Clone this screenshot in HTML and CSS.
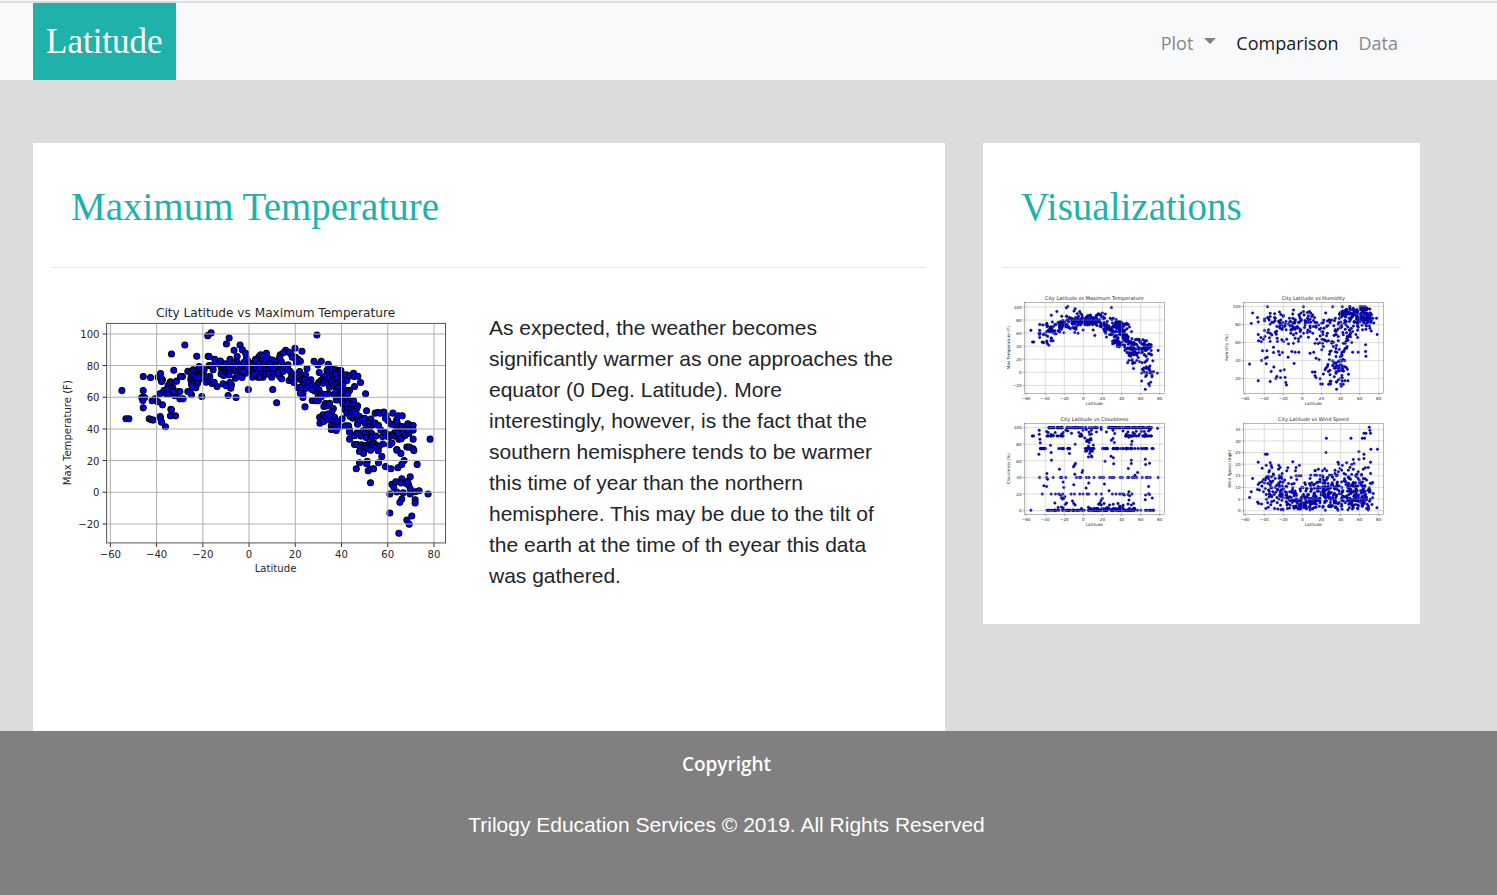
FILE: index.html
```html
<!DOCTYPE html>
<html lang="en">
<head>
<meta charset="utf-8">
<meta name="viewport" content="width=device-width, initial-scale=1">
<title>Latitude - Maximum Temperature</title>
<link rel="stylesheet" href="styles.css">
</head>
<body>
<header class="navbar">
  <a class="brand" href="#">Latitude</a>
  <nav class="nav-links" aria-label="Main">
    <button class="nav-item nav-toggle" type="button" aria-haspopup="true">Plot<span class="caret"></span></button>
    <a class="nav-item active" href="#comparison">Comparison</a>
    <a class="nav-item" href="#data">Data</a>
  </nav>
</header>
<main class="content">
  <section class="card card-main">
    <h1 class="card-title">Maximum Temperature</h1>
    <hr class="rule">
    <div class="article">
      <figure class="plot" data-chart="temperature"></figure>
      <p class="description">As expected, the weather becomes significantly warmer as one approaches the equator (0 Deg. Latitude). More interestingly, however, is the fact that the southern hemisphere tends to be warmer this time of year than the northern hemisphere. This may be due to the tilt of the earth at the time of th eyear this data was gathered.</p>
    </div>
  </section>
  <aside class="card card-side">
    <h2 class="card-title">Visualizations</h2>
    <hr class="rule">
    <div class="thumbs">
      <a class="plot" href="#temperature" data-chart="temperature"></a>
      <a class="plot" href="#humidity" data-chart="humidity"></a>
      <a class="plot" href="#cloudiness" data-chart="cloudiness"></a>
      <a class="plot" href="#wind" data-chart="wind"></a>
    </div>
  </aside>
</main>
<footer class="footer">
  <h2 class="footer-title">Copyright</h2>
  <p class="footer-text">Trilogy Education Services © 2019. All Rights Reserved</p>
</footer>
<script src="charts.js"></script>
</body>
</html>
```

FILE: styles.css
```css
* {
  box-sizing: border-box;
}

body {
  margin: 0;
  min-height: 100vh;
  display: flex;
  flex-direction: column;
  background: #dcdcdc;
  color: #212529;
  font-family: "Liberation Sans", Arial, sans-serif;
  font-size: 21px;
  line-height: 31px;
  border-top: 1px solid #f8f9fa;
}

.navbar {
  display: flex;
  justify-content: space-between;
  align-items: stretch;
  min-height: 77px;
  margin-top: 2px;
  padding: 0 89px 0 33px;
  background: #f8f9fb;
}

.brand {
  padding: 16px 13px;
  background: #20b2aa;
  color: #fff;
  font-family: "Liberation Serif", "Times New Roman", serif;
  font-size: 35px;
  line-height: 45px;
  text-decoration: none;
}

.nav-links {
  display: flex;
  align-items: center;
  padding-top: 3px;
}

.nav-item {
  padding: 0 10px;
  border: 0;
  background: none;
  color: #858687;
  font-family: "Open Sans", "Noto Sans", sans-serif;
  font-size: 18px;
  font-weight: 400;
  line-height: 31px;
  text-decoration: none;
  cursor: pointer;
}

.nav-item.active {
  color: #191919;
}

.nav-toggle {
  display: flex;
  align-items: center;
  gap: 11px;
}

.caret {
  margin-bottom: 4px;
  border-top: 6px solid #808182;
  border-left: 6px solid transparent;
  border-right: 6px solid transparent;
}

.content {
  flex: 1;
  display: grid;
  grid-template-columns: minmax(0, 912fr) minmax(0, 437fr);
  gap: 38px;
  padding: 63px 77px 0 33px;
}

.card {
  padding: 38px 19px 0;
  background: #fff;
}

.card-side {
  align-self: start;
  padding-bottom: 94px;
}

.card-title {
  margin: 0;
  padding: 0 19px;
  color: #20b2aa;
  font-family: Georgia, "Liberation Serif", serif;
  font-size: 39px;
  font-weight: 400;
  line-height: 52px;
}

.rule {
  margin: 34px 0 20px;
  border: 0;
  border-top: 1px solid #e5e5e5;
}

.article {
  display: grid;
  grid-template-columns: 1fr 1fr;
  align-items: start;
}

.plot {
  display: block;
  margin: 0;
}

.plot svg {
  display: block;
  width: 100%;
  height: auto;
}

.description {
  margin: 24px 0 0;
  padding-right: 27px;
}

.thumbs {
  display: grid;
  grid-template-columns: 1fr 1fr;
  gap: 1px 38px;
}

.footer {
  min-height: 164px;
  padding: 18px 44px 0 0;
  background: #808080;
  color: #fff;
  text-align: center;
}

.footer-title {
  margin: 0;
  font-family: "Open Sans", "Noto Sans", sans-serif;
  font-size: 19px;
  font-weight: 600;
  line-height: 31px;
}

.footer-text {
  margin: 29px 0 0;
}

.chart-text {
  fill: #262626;
  font-family: "DejaVu Sans", sans-serif;
  font-size: 10px;
}

.chart-title {
  font-size: 12px;
}

.anchor-middle {
  text-anchor: middle;
}

.anchor-end {
  text-anchor: end;
}

.chart-grid {
  fill: none;
  stroke: #b0b0b0;
  stroke-width: 1;
}

.chart-ticks {
  fill: none;
  stroke: #333;
  stroke-width: 1;
}

.chart-frame {
  fill: none;
  stroke: #555;
  stroke-width: 1;
}

.chart-dots {
  fill: #0000f0;
  stroke: #000;
  stroke-width: 1;
}

.thumbs .chart-dots {
  stroke: #000050;
}
```

FILE: charts.js
```js
// Each series lists "x,y" pairs on its own drawing grid; origin and scale map them to the 432x288 chart.
const big = (x, y) => ({ dx: x, dy: y, k: 3.039 });
const small = (x, y) => ({ dx: x, dy: y, k: 1.257 });

const charts = {
  temperature: {
    title: "City Latitude vs Maximum Temperature",
    label: "Max Temperature (F)",
    labelX: 19,
    ticks: [100, 80, 60, 40, 20, 0, -20], top: 45.4, step: 31.3,
    series: [
      { ...big(-6, 36), points: `216,272 228,357 237,357 280,230 302,233 325,231 332,221 338,240 280,272 276,293 284,293 279,302 280,324 298,357 305,360 310,361 331,350 332,355 335,367 347,381 338,315 307,303 315,297 324,306 363,328 365,330 362,348 377,348 365,162 372,211 405,135 474,107 484,99 441,169 475,169 478,170 538,114 530,132 553,151 571,135 578,150 588,160 562,170 541,178 560,184 596,269 535,287 559,293 456,290 414,275 425,285 421,278 414,214 430,210 448,200 398,230 392,230 380,244 362,246 360,250 355,257 330,282 342,272 349,282 357,282 365,270 369,262 360,265 375,288 383,276 390,275 390,297 400,297 334,235 335,245 425,215 432,213 440,217 448,212 455,213 463,210 424,230 432,228 440,229 448,225 455,222 423,240 430,243 438,240 447,240 455,233 425,252 433,250 443,251 433,261 438,264 427,260 469,247 477,240 480,230 487,251 493,247 502,260 490,210 478,197 485,197 495,178 502,192 512,183 515,205 520,213 528,205 520,195 527,192 514,222 522,227 532,217 538,225 540,213 541,205 548,196 552,190 550,200 556,213 557,235 563,225 570,210 572,197 575,215 577,233 583,205 588,220 590,192 595,183 590,175 600,200 605,215 608,232 600,210 610,190 618,178 618,195 620,210 625,232 625,220 628,170 520,252 530,258 543,265 545,255 540,248 582,188 584,213 594,204 612,222 468,230 456,228 446,232 370,275 352,268` },
      { ...big(564, 36), points: `99,269 111,309 196,321 232,105 166,145 187,154 138,151 154,162 148,157 80,160 63,165 70,170 85,175 98,180 110,183 122,165 125,185 132,158 168,172 175,178 182,184 170,188 158,172 223,184 245,184 266,193 235,195 202,206 180,215 239,218 47,180 60,190 68,197 75,188 82,200 90,192 75,207 87,210 97,203 105,196 112,203 103,212 118,212 125,207 130,215 132,198 145,195 145,209 152,215 160,224 55,215 62,222 70,232 60,232 80,222 88,222 96,232 60,205 105,222 120,230 126,237 115,218 120,172 148,242 157,240 155,232 165,238 163,248 172,225 180,232 185,241 190,238 198,225 196,240 192,255 175,264 182,262 186,272 190,282 190,293 182,280 200,265 205,255 214,240 208,248 218,256 225,265 230,258 227,274 218,270 238,270 237,248 244,242 250,236 250,250 258,228 262,211 270,213 278,208 288,210 296,212 304,212 255,242 265,236 272,230 280,225 288,222 297,222 305,222 265,250 275,245 285,240 293,235 303,235 312,228 320,225 270,262 280,258 288,252 298,248 306,245 315,240 322,242 330,228 342,220 343,230 355,229 363,248 345,260 378,282 330,271 322,272 312,270 305,262 310,255 296,265 290,275 283,283 292,287 300,290 308,285 318,284 325,282 307,275 265,282 255,283 243,280 240,288 235,293 218,302 227,303 236,303 245,291 257,311 253,320 262,318 270,310 281,326 277,335 290,300 297,300 305,297 316,297 324,300 333,303 342,303 310,312 318,318 326,312 334,318 344,315 354,318 315,328 324,328 333,330 345,328 352,325 322,340 335,340 345,335 240,352 241,370 250,345 257,355 252,365 264,343 266,360 272,350 278,362 281,372 275,378 285,352 288,362 296,366 297,376 285,383 275,389 290,392 308,357 302,380 318,378 327,378 330,390 332,350 340,355 345,348 353,352 350,342 360,350 354,373 362,363 368,358 376,370 375,355 381,333 394,358 390,370 393,380 400,375 407,370 417,377 407,340 415,338 422,340 433,337 440,348 445,362 438,355 460,340 476,348 488,348 471,361 455,373 465,375 473,368 475,382 487,380 498,381 505,372 513,378 521,377 521,391 330,397 330,418 345,408 352,400 364,409 370,393 380,390 378,400 380,413 396,401 397,412 409,409 424,391 429,410 437,398 447,405 447,412 457,408 462,402 468,395 470,410 478,408 487,403 490,410 492,395 497,407 508,401 505,390 475,400 478,418 485,417 521,418 572,418 345,434 353,434 366,435 362,443 375,440 382,436 390,432 397,432 403,430 410,436 418,440 430,433 450,435 457,430 472,449 502,442 510,442 521,447 385,445 395,447 405,443` },
      { ...big(564, 456), points: `360,35 372,41 393,31 416,33 427,50 472,31 484,41 523,32 350,87 360,69 383,65 381,72 386,93 393,88 402,87 417,69 438,80 454,87 475,84 487,74 494,62 533,74 393,129 512,111 487,117 457,134 463,143 469,126 485,130 500,131 508,137 512,147 505,125 451,163 472,157 491,159 512,163 527,156 539,153 566,163 487,178 481,188 527,180 527,190 451,220 517,229 502,241 509,254 478,281` }
    ]
  },
  humidity: {
    title: "City Latitude vs Humidity",
    label: "Humidity (%)",
    labelX: 17,
    ticks: [100, 80, 60, 40, 20], top: 44.5, step: 43.1,
    series: [
      { ...small(-2, 6), points: `142,50 97,69 93,101 112,83 114,96 142,83 133,93 133,87 150,70 150,80 147,90 155,97 150,103 160,97 165,85 178,66 182,74 182,90 175,95 180,105 188,98 195,103 205,103 170,110 180,115 190,110 198,120 210,108 212,95 208,85 212,120 218,115 225,118 218,72 220,60 223,100 226,90 232,110 235,98 240,85 238,78 245,90 250,50 250,65 252,75 262,68 268,65 265,78 272,70 275,80 262,85 270,88 278,75 258,95 255,105 265,98 272,97 280,92 285,98 290,98 270,108 280,110 288,112 296,105 305,100 303,115 310,98 317,69 322,93 330,93 320,110 335,90 338,50 312,115 358,72 367,72 362,68 367,50 375,65 380,60 390,50 400,55 420,50 426,50 88,223 114,134 115,153 122,143 123,156 134,140 130,148 133,122 143,128 145,120 150,130 148,144 150,155 165,127 155,135 160,172 160,188 178,195 187,188 175,185 171,145 172,155 127,183 140,183 124,212 138,222 135,205 141,202 204,202 222,221 161,232 153,245 181,243 192,240 181,264 170,260 167,266 195,263 197,278 199,286 114,273 150,275 185,150 190,155 200,148 205,162 212,130 220,135 228,130 225,145 220,160 215,185 225,187 236,187 235,155 240,125 242,140 250,130 262,128 265,142 270,125 278,130 285,160 290,148 300,138 305,125 307,160 312,150 322,130 320,155 270,190 281,187 288,205 297,210 305,180 310,170 277,247 285,247 288,264 285,258 300,267 302,283 310,253 307,283 330,275 350,299 362,283 375,273 384,273 367,265 318,235 315,240 322,230 325,245 330,255 437,165 437,185 438,199 415,187 398,187 472,134 470,85 370,160 378,155 372,182 380,175 366,195 330,185 340,170 335,160 328,210 450,115 438,118 428,120 415,112 390,135 382,140 398,125`,
        clouds: [[412, 76, 40, 24, 75], [438, 70, 22, 34, 55], [355, 225, 22, 40, 60], [358, 130, 34, 38, 50], [385, 95, 25, 30, 20], [245, 100, 50, 30, 28], [180, 100, 32, 22, 16]], limits: [80, 462, 50, 300] }
    ]
  },
  cloudiness: {
    title: "City Latitude vs Cloudiness",
    label: "Cloudiness (%)",
    labelX: 19,
    ticks: [100, 80, 60, 40, 20, 0], top: 44.5, step: 39.8,
    series: [
      { ...small(-6, 9), points: `97,72 101,72 118,55 118,67 120,82 121,93 117,127 152,100 154,122 155,145 179,172 209,125 226,97 227,155 224,160 221,165 140,59 145,62 160,70 154,68 166,62 185,67 190,62 198,55 204,57 215,64 237,62 244,66 250,55 260,53 268,60 270,68 275,66 273,80 265,86 268,92 262,85 266,135 276,135 270,125 272,118 262,117 275,55 290,60 305,53 320,60 340,55 345,65 340,80 335,85 344,92 334,133 341,138 342,156 316,148 370,57 380,66 385,60 388,76 395,98 397,88 400,62 405,66 410,58 395,145 395,155 386,170 437,142 438,158 450,154 414,182 406,190 420,67 425,59 434,59 438,66 447,57 452,53 474,49 93,296 127,247 132,222 140,224 141,185 140,197 143,202 154,247 190,211 192,227 222,219 225,187 249,176 247,182 259,229 267,214 314,217 328,237 388,240 385,248 390,252 374,250 447,224 437,264 458,259 438,250 447,246 450,248 182,250 185,258 192,260 195,255 188,262 200,274 196,278 218,268 222,275 226,280 165,274 175,287 185,286 190,289 304,266 308,260 313,275 300,277 355,275 360,283 385,277 388,265 395,280 402,275 119,197 160,197 182,197 186,197 198,197 230,197 239,197 243,197 260,197 268,197 283,197 300,197 307,197 312,197 330,197 337,197 343,197 362,197 368,197 384,197 388,197 398,197 404,197 411,197 428,197 440,197 444,197 452,197 476,197 167,247 177,247 189,247 214,247 224,247 240,247 250,247 262,247 267,247 289,247 305,247 338,247 349,247 360,247 366,247 371,247 397,247`,
        bands: [[142, 305, 47, 48], [325, 458, 47, 60], [140, 195, 72, 12], [238, 252, 72, 5], [375, 460, 72, 26], [118, 140, 110, 10], [175, 210, 110, 10], [256, 284, 110, 10], [308, 462, 110, 40], [140, 255, 296, 34], [265, 405, 296, 70], [270, 405, 291, 30], [405, 465, 296, 9]],
        clouds: [[330, 288, 70, 12, 25], [272, 108, 12, 24, 10]], limits: [90, 470, 47, 296] }
    ]
  },
  wind: {
    title: "City Latitude vs Wind Speed",
    label: "Wind Speed (mph)",
    labelX: 24,
    ticks: [35, 30, 25, 20, 15, 10, 5, 0], top: 48.5, step: 27.85,
    series: [
      { ...small(-2, 9), points: `448,46 450,55 452,64 432,64 438,64 319,79 393,79 427,79 434,79 453,112 473,112 318,122 417,120 432,127 432,140 417,142 400,143 402,155 452,151 354,151 356,157 380,153 390,167 395,158 367,160 360,170 365,175 385,175 400,172 415,180 430,172 436,168 445,167 411,187 395,188 425,188 418,205 430,200 440,205 452,185 135,127 141,127 114,151 138,160 126,169 150,153 153,160 155,167 148,176 176,160 180,167 175,172 203,168 218,150 238,160 228,167 226,177 200,177 186,185 295,172 285,177 307,177 320,177 345,175 97,200 93,240 88,257 112,233 114,218 118,213 125,210 125,223 118,235 112,271 115,275 124,277 137,290 130,203 140,195 135,205 154,195 160,190 165,200 158,208 143,215 150,220 135,230 145,235 155,228 148,247 138,248 130,240 158,240 162,248 155,255 165,227 175,215 180,210 188,212 185,200 178,225 172,235 182,235 190,230 195,240 186,245 180,250 170,257 176,262 190,258 200,250 205,262 198,270 163,290 173,292 188,292 202,290 210,280 215,217 222,215 228,192 230,203 236,192 243,192 213,197 218,228 215,240 225,238 228,245 222,252 240,232 254,213 256,218 270,200 272,190 284,190 290,190 268,215 275,213 300,202 308,192 320,203 328,190 335,190 345,185 352,190 355,180 377,188 471,288 460,245 450,235 458,258 440,290 427,283 400,288 455,215 448,228 385,195 372,185 205,215 200,225`,
        clouds: [[350, 245, 72, 45, 145], [365, 250, 70, 38, 75], [262, 278, 42, 20, 75], [425, 245, 35, 42, 65], [300, 240, 50, 38, 40], [220, 268, 45, 24, 35], [182, 230, 10, 50, 18], [148, 225, 14, 46, 18]], limits: [88, 462, 158, 296] }
    ]
  }
};

function seededRandom(seed) {
  let s = seed;
  return () => {
    s = (s * 16807) % 2147483647;
    return s / 2147483647;
  };
}

function seriesPoints(series, random) {
  const points = series.points.trim().split(/\s+/).map(pair => pair.split(",").map(Number));
  for (const [x1, x2, y, count] of series.bands || []) {
    for (let i = 0; i < count; i++) points.push([x1 + (x2 - x1) * random(), y]);
  }
  for (const [cx, cy, rx, ry, count] of series.clouds || []) {
    const [minX, maxX, minY, maxY] = series.limits;
    for (let i = 0; i < count;) {
      const x = cx + rx * (random() + random() + random() - 1.5) * 1.3;
      const y = cy + ry * (random() + random() + random() - 1.5) * 1.3;
      if (x < minX || x > maxX || y < minY || y > maxY) continue;
      points.push([x, y]);
      i++;
    }
  }
  return points.map(([x, y]) => [(x + series.dx) / series.k, (y + series.dy) / series.k]);
}

function drawChart(chart) {
  const random = seededRandom(4211);
  const left = 54, right = 389, top = 35, bottom = 252;
  let grid = "", ticks = "", text = "", dots = "";
  for (let i = 0; i < 8; i++) {
    const x = 57.7 + i * 45.7;
    grid += `M${x} ${top}V${bottom}`;
    ticks += `M${x} ${bottom}v4`;
    text += `<text class="chart-text anchor-middle" x="${x}" y="267">${String(i * 20 - 60).replace("-", "−")}</text>`;
  }
  chart.ticks.forEach((value, i) => {
    const y = chart.top + i * chart.step;
    grid += `M${left} ${y}H${right}`;
    ticks += `M${left} ${y}h-4`;
    text += `<text class="chart-text anchor-end" x="47" y="${y + 4}">${String(value).replace("-", "−")}</text>`;
  });
  for (const series of chart.series) {
    for (const [x, y] of seriesPoints(series, random)) {
      dots += `<circle cx="${x.toFixed(1)}" cy="${y.toFixed(1)}" r="3"/>`;
    }
  }
  return `<svg viewBox="0 0 432 288" role="img" aria-label="${chart.title}">
    <g class="chart-dots">${dots}</g>
    <path class="chart-grid" d="${grid}"/>
    <path class="chart-ticks" d="${ticks}"/>
    <rect class="chart-frame" x="${left}" y="${top}" width="${right - left}" height="${bottom - top}"/>
    ${text}
    <text class="chart-text chart-title anchor-middle" x="221" y="29">${chart.title}</text>
    <text class="chart-text anchor-middle" x="221" y="281">Latitude</text>
    <text class="chart-text anchor-middle" transform="translate(${chart.labelX} 143) rotate(-90)">${chart.label}</text>
  </svg>`;
}

document.querySelectorAll("[data-chart]").forEach(node => {
  node.innerHTML = drawChart(charts[node.dataset.chart]);
});
```
